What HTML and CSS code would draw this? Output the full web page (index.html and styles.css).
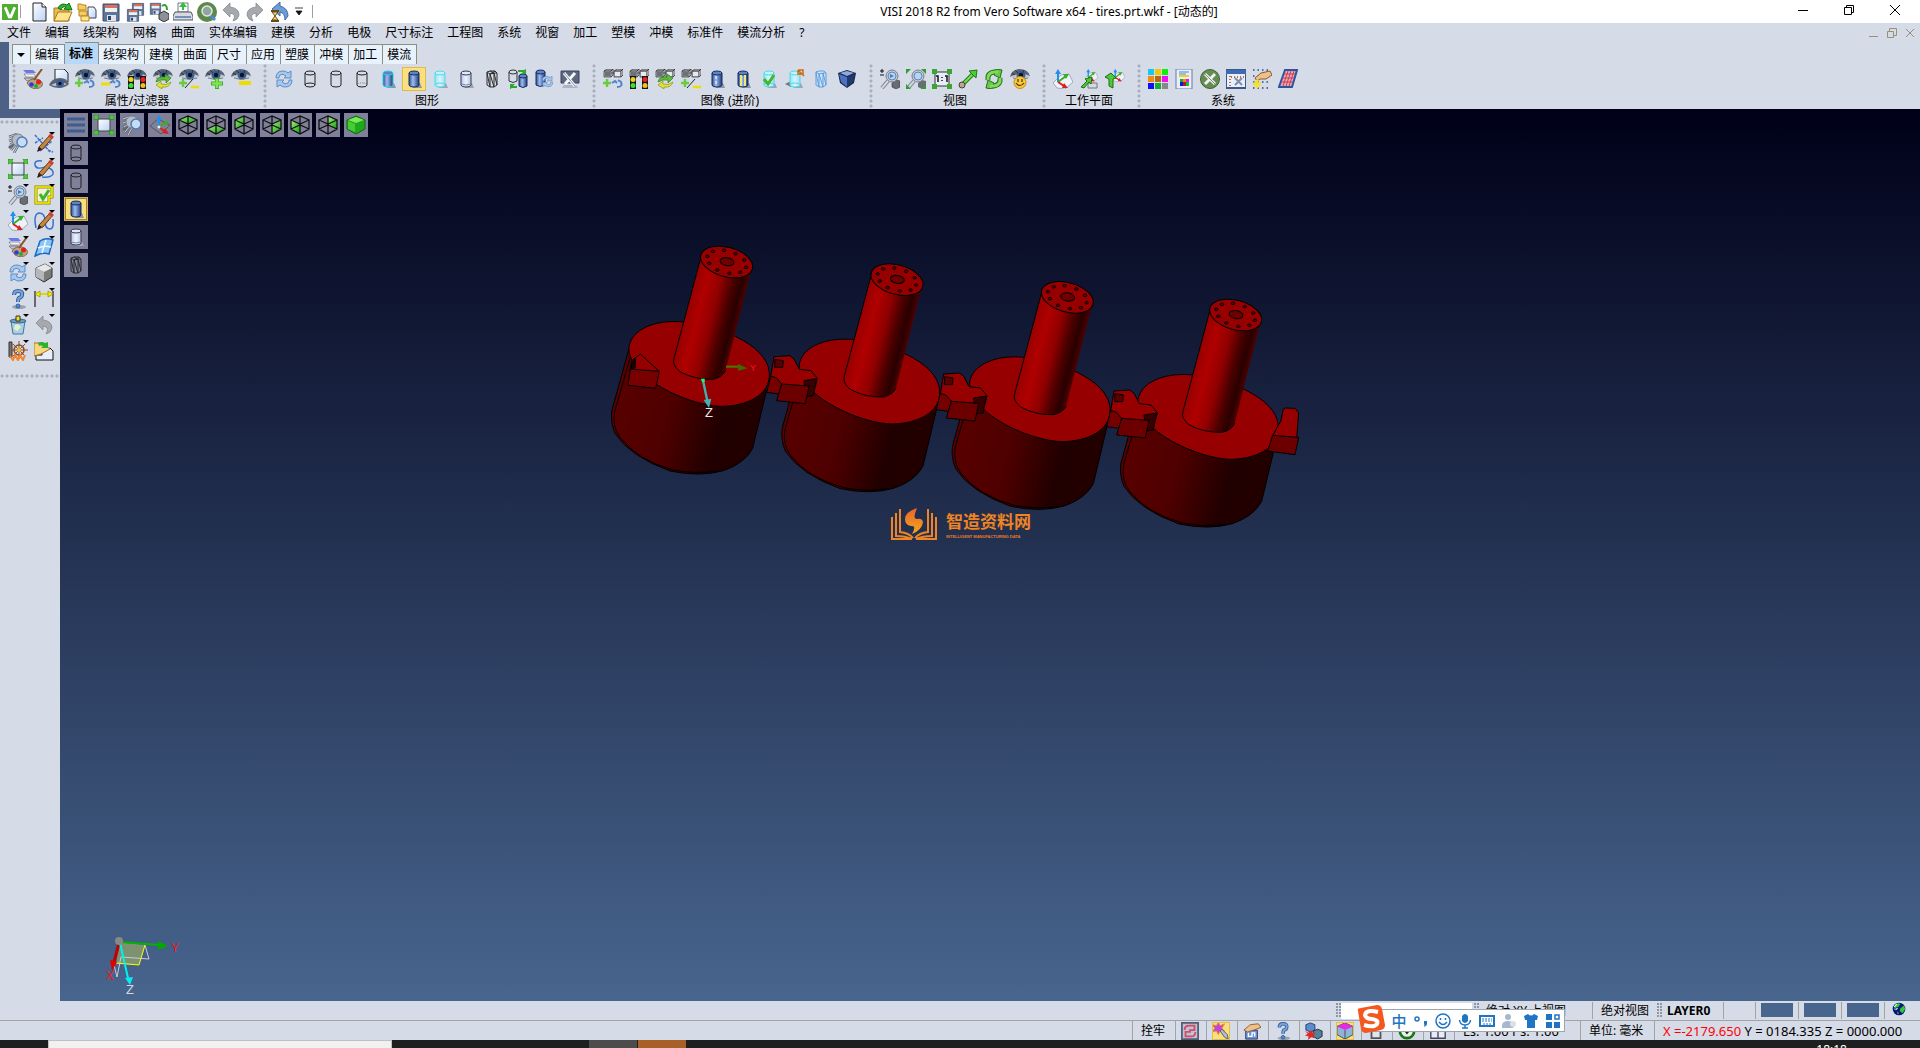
FILE: index.html
```html
<!DOCTYPE html>
<html lang="zh-CN">
<head>
<meta charset="utf-8">
<title>VISI 2018 R2 from Vero Software x64 - tires.prt.wkf - [动态的]</title>
<link rel="stylesheet" href="styles.css">
</head>
<body>
<svg class="sprite" aria-hidden="true">
<defs>
<linearGradient id="gBlue"><stop offset="0" stop-color="#2c4f94"/><stop offset=".4" stop-color="#9dbdf0"/><stop offset="1" stop-color="#1d3a78"/></linearGradient>
<linearGradient id="gLight"><stop offset="0" stop-color="#b4c4e6"/><stop offset=".5" stop-color="#eef3ff"/><stop offset="1" stop-color="#b4c4e6"/></linearGradient>
<linearGradient id="gCyan"><stop offset="0" stop-color="#8fe4f4"/><stop offset=".5" stop-color="#dcf4fc"/><stop offset="1" stop-color="#a8d8ee"/></linearGradient>
<linearGradient id="gPane" x2="1" y2="1"><stop offset="0" stop-color="#fff"/><stop offset="1" stop-color="#b9d2f7"/></linearGradient>
<linearGradient id="gGreen" x2="1" y2="1"><stop offset="0" stop-color="#a4f07c"/><stop offset="1" stop-color="#12a012"/></linearGradient>
<linearGradient id="gOrange" x2="0" y2="1"><stop offset="0" stop-color="#e8642c"/><stop offset="1" stop-color="#f4a71c"/></linearGradient>
<linearGradient id="gShaft" gradientUnits="userSpaceOnUse" x1="258" y1="240" x2="414" y2="280"><stop offset="0" stop-color="#960000"/><stop offset=".25" stop-color="#b00000"/><stop offset=".5" stop-color="#900000"/><stop offset=".72" stop-color="#4a0000"/><stop offset=".88" stop-color="#280000"/><stop offset="1" stop-color="#500000"/></linearGradient>
<linearGradient id="gBody" gradientUnits="userSpaceOnUse" x1="60" y1="540" x2="470" y2="640"><stop offset="0" stop-color="#580000"/><stop offset=".35" stop-color="#4e0000"/><stop offset=".72" stop-color="#200000"/><stop offset="1" stop-color="#230000"/></linearGradient>
</defs>

<symbol id="eye" viewBox="0 0 20 20"><path d="M1 8Q6 3 12 3Q18 4 20 8Q14 12 7 10Z" fill="#c3c9d6"/><path d="M0 8Q1 1 9 0Q18 0 20 7Q14 4 8 5Q3 6 0 8Z" fill="#5b6472"/><circle cx="11" cy="6" r="4.500" fill="#3c5f92"/><circle cx="11" cy="6" r="2.200" fill="#0c1424"/><path d="M2 4L5 6M5 1L8 4M14 1L13 4" stroke="#2c3440"/><path d="M3 9Q10 12 18 9" fill="none" stroke="#7a8290"/></symbol>
<symbol id="link" viewBox="0 0 20 20"><path d="M9 14L12 12L14 14M14 18Q20 18 18 13L15 11" fill="none" stroke="#4d84cc" stroke-width="2"/></symbol>
<symbol id="plus" viewBox="0 0 20 20"><path d="M12 9V20M6 14.500H18" stroke="#3fae2f" stroke-width="4"/><path d="M12 10V19M7 14.500H17" stroke="#7fe64a" stroke-width="2.500"/></symbol>
<symbol id="plusS" viewBox="0 0 20 20"><path d="M4 10V18M0 14H8" stroke="#68cc3c" stroke-width="2.500"/></symbol>
<symbol id="lights" viewBox="0 0 20 20"><path d="M1 7H7V20H1ZM13 7H19V20H13Z" fill="#161616"/><circle cx="4" cy="10.500" r="2.500" fill="#f0d020"/><circle cx="4" cy="16.500" r="2.500" fill="#38e038"/><circle cx="16" cy="10.500" r="2.500" fill="#f02020"/><circle cx="16" cy="16.500" r="2.500" fill="#f0c020"/></symbol>
<symbol id="cycle" viewBox="0 0 20 20"><path d="M3 13Q4 7 12 8L12 5L18 9L13 14V11Q8 10 3 13Z" fill="#60b83c" stroke="#2d7c18" stroke-width=".7"/><path d="M18 13Q16 19 9 18V20L3 16L8 12V15Q13 17 18 13Z" fill="#e2e235" stroke="#8a9216" stroke-width=".7"/></symbol>
<symbol id="pm" viewBox="0 0 20 20"><path d="M4 10V18M0 14H8" stroke="#68cc3c" stroke-width="2.500"/><path d="M6 19L14 10" stroke="#222"/><path d="M12 18H20" stroke="#f2dc00" stroke-width="2.500"/></symbol>
<symbol id="eyeLink" viewBox="0 0 20 20"><use href="#eye"/><use href="#plusS"/><use href="#link"/></symbol>
<symbol id="eyeUnlink" viewBox="0 0 20 20"><use href="#eye"/><path d="M0 15H9" stroke="#f2dc00" stroke-width="3"/><use href="#link"/></symbol>
<symbol id="eyeLights" viewBox="0 0 20 20"><use href="#eye"/><use href="#lights"/></symbol>
<symbol id="eyeCycle" viewBox="0 0 20 20"><use href="#eye"/><use href="#cycle"/></symbol>
<symbol id="eyePm" viewBox="0 0 20 20"><use href="#eye"/><use href="#pm"/></symbol>
<symbol id="eyePlus" viewBox="0 0 20 20"><use href="#eye"/><use href="#plus"/></symbol>
<symbol id="eyeMinus" viewBox="0 0 20 20"><use href="#eye"/><path d="M8 14H20" stroke="#f2dc00" stroke-width="4"/></symbol>
<symbol id="palette" viewBox="0 0 20 20"><path d="M0 1H10L13 4H3Z" fill="#6a78e8"/><path d="M1 5H11L13 8H3Z" fill="#f0f2f8" stroke="#666" stroke-width=".6"/><path d="M1 9H10L11 12H4Z" fill="#bcc2d0" stroke="#555" stroke-width=".6"/><path d="M4 14Q7 9 14 10Q21 12 19 17Q14 22 7 18Z" fill="#c6a07a" stroke="#6e4a2a" stroke-width=".7"/><circle cx="8.500" cy="15.500" r="2.300" fill="#2040e0"/><circle cx="13" cy="17" r="2" fill="#18b030"/><circle cx="15.500" cy="13" r="2.500" fill="#e02020"/><path d="M19 0L11 11" stroke="#8a5426" stroke-width="2"/></symbol>
<symbol id="docEye" viewBox="0 0 20 20"><path d="M6 0H15L19 4V13H6Z" fill="url(#gPane)" stroke="#222"/><path d="M0 16Q3 9 11 9Q18 9 20 15Q17 18 11 19Q4 19 0 16Z" fill="#59626f"/><path d="M2 16Q10 11 18 15Q10 19 2 16Z" fill="#b9c0ce"/><circle cx="11" cy="14.500" r="4" fill="#3c5e98"/><circle cx="11" cy="14.500" r="1.700" fill="#111"/></symbol>
<symbol id="sync" viewBox="0 0 20 20"><path d="M2 9Q2 2 9 2Q12 2 14 4L17 2V9H10L12 7Q9 4 6 6Q5 7 5 9Z" fill="#a6c8ee" stroke="#5d8dc4"/><path d="M18 11Q18 18 11 18Q8 18 6 16L3 18V11H10L8 13Q11 16 14 14Q15 13 15 11Z" fill="#a6c8ee" stroke="#5d8dc4"/></symbol>
<symbol id="cylWire" viewBox="0 0 20 20"><path d="M5 4V16Q5 18 10 18T15 16V4" fill="none" stroke="#222"/><ellipse cx="10" cy="4" rx="5" ry="2" fill="none" stroke="#222"/><path d="M5 16Q5 14 10 14T15 16" fill="none" stroke="#222"/></symbol>
<symbol id="cylOpen" viewBox="0 0 20 20"><path d="M5 4V16Q5 18 10 18T15 16V4" fill="none" stroke="#222"/><ellipse cx="10" cy="4" rx="5" ry="2" fill="none" stroke="#222"/></symbol>
<symbol id="cylDim" viewBox="0 0 20 20"><use href="#cylOpen"/><path d="M5 16Q5 14 10 14T15 16" fill="none" stroke="#777" stroke-dasharray="1 1"/></symbol>
<symbol id="cylBlue" viewBox="0 0 20 20"><path d="M8 19H18L16 14Z" fill="#8d94a6"/><path d="M5 4V16Q5 18 10 18T15 16V4Z" fill="url(#gBlue)" stroke="#182d5c"/><ellipse cx="10" cy="4" rx="5" ry="2" fill="#5e84c8" stroke="#182d5c"/></symbol>
<symbol id="cylEdge" viewBox="0 0 20 20"><path d="M8 19H18L16 14Z" fill="#8d94a6"/><path d="M5 4V16Q5 18 10 18T15 16V4Z" fill="url(#gBlue)" stroke="#28cfe6"/><ellipse cx="10" cy="4" rx="5" ry="2" fill="#5e84c8" stroke="#28cfe6"/></symbol>
<symbol id="cylCyan" viewBox="0 0 20 20"><path d="M8 19H18L16 14Z" fill="#9da4b4"/><path d="M5 4V16Q5 18 10 18T15 16V4Z" fill="url(#gCyan)" stroke="#46dcec"/><ellipse cx="10" cy="4" rx="5" ry="2" fill="#c9f1fa" stroke="#46dcec"/><path d="M5 16Q5 14 10 14T15 16" fill="none" stroke="#46dcec"/></symbol>
<symbol id="cylLight" viewBox="0 0 20 20"><path d="M8 19H18L16 14Z" fill="#9da4b4"/><path d="M5 4V16Q5 18 10 18T15 16V4Z" fill="url(#gLight)" stroke="#333c50"/><ellipse cx="10" cy="4" rx="5" ry="2" fill="#dfe7f8" stroke="#333c50"/><path d="M5 15Q10 17 15 15" fill="none" stroke="#7888a8"/></symbol>
<symbol id="cylTri" viewBox="0 0 20 20"><path d="M5 3L8 2H13L15 4V16L12 18H8L5 16ZM5 3L8 5L13 4L15 4M8 5V18M8 5L12 18V4L15 16M8 18L5 4M8 5L13 2M12 4L8 2" fill="none" stroke="#2c2c2c"/></symbol>
<symbol id="cylMesh" viewBox="0 0 20 20"><path d="M5 3L8 2H13L15 4V16L12 18H8L5 16ZM5 3L8 5L13 4L15 4M8 5V18M8 5L12 18V4L15 16M8 18L5 4" fill="#cfe3fa" stroke="#5d9edc"/></symbol>
<symbol id="cylSwap" viewBox="0 0 20 20"><path d="M1 3V12Q5 15 9 12V3" fill="none" stroke="#333"/><ellipse cx="5" cy="3" rx="4" ry="2" fill="none" stroke="#333"/><path d="M11 7V17Q15 20 19 17V7Z" fill="url(#gBlue)" stroke="#182d5c"/><ellipse cx="15" cy="7" rx="4" ry="2" fill="#5e84c8" stroke="#182d5c"/><path d="M10 1H16L18 0V5H13L15 3H10ZM9 19H4L2 20V15H7L5 17H9Z" fill="#2fa62f"/></symbol>
<symbol id="cylSync" viewBox="0 0 20 20"><path d="M2 3V16Q6 19 11 16V3Z" fill="url(#gBlue)" stroke="#182d5c"/><ellipse cx="6.500" cy="3" rx="4.500" ry="2" fill="#5e84c8" stroke="#182d5c"/><use href="#sync" x="7" y="6" width="13" height="13"/></symbol>
<symbol id="wrench" viewBox="0 0 20 20"><path d="M1 2H19V14H1Z" fill="#5c6880" stroke="#39435a"/><path d="M4 16H16L18 19H2Z" fill="#aeb4c4"/><path d="M4 4L15 17M15 4L5 15" stroke="#f4f6fa" stroke-width="3"/><path d="M4 4L15 17" stroke="#8993a8"/></symbol>
<symbol id="boxes" viewBox="0 0 20 20"><path d="M1 2L4 0H10L8 2V8H1ZM11 2L14 0H20L18 2V8H11Z" fill="#a9adb6" stroke="#444" stroke-width=".8"/><path d="M1 2H8L10 0V6L8 8M11 2H18L20 0V6L18 8M8 4H11" fill="none" stroke="#333" stroke-width=".8"/><path d="M2 3H7V7H2Z" fill="#6c7078"/><path d="M12 3H17V7H12Z" fill="#e6e9f0"/></symbol>
<symbol id="boxLink" viewBox="0 0 20 20"><use href="#boxes"/><use href="#plusS"/><use href="#link"/></symbol>
<symbol id="boxLights" viewBox="0 0 20 20"><use href="#boxes"/><use href="#lights"/></symbol>
<symbol id="boxCycle" viewBox="0 0 20 20"><use href="#boxes"/><use href="#cycle"/></symbol>
<symbol id="boxPm" viewBox="0 0 20 20"><use href="#boxes"/><use href="#pm"/></symbol>
<symbol id="cylDash" viewBox="0 0 20 20"><use href="#cylBlue"/><path d="M9 7V17" stroke="#fff" stroke-dasharray="3 2"/></symbol>
<symbol id="cylStripe" viewBox="0 0 20 20"><use href="#cylBlue"/><path d="M8 6V17M12 6V17" stroke="#f2e878" stroke-width="2"/></symbol>
<symbol id="cylCheck" viewBox="0 0 20 20"><use href="#cylCyan"/><path d="M5 10L9 15L15 6" fill="none" stroke="#45b52c" stroke-width="3"/></symbol>
<symbol id="cylTag" viewBox="0 0 20 20"><path d="M0 15L6 12V18Z" fill="#777"/><use href="#cylCyan"/><path d="M13 1H18V6M13 1V5H17M14 2L19 7" fill="none" stroke="#d06a10" stroke-width="1.500"/></symbol>
<symbol id="cubeDark" viewBox="0 0 20 20"><path d="M1 4L10 1L19 4L17 14L10 19L3 14Z" fill="#16264e"/><path d="M2 5L10 8V18L4 13Z" fill="#4b72c0"/><path d="M3 4L10 2L17 4L10 7Z" fill="#8fa9dc"/><path d="M10 8L18 5L16 13L10 18Z" fill="#23396e"/></symbol>
<symbol id="lens" viewBox="0 0 20 20"><path d="M8 12L2 19" stroke="#7c8490" stroke-width="4"/><path d="M8 12L2 19" stroke="#d0d5de" stroke-width="2"/><circle cx="12" cy="7" r="6" fill="#c3ccd8" stroke="#77808e"/><circle cx="12" cy="7" r="4" fill="#b9d5f2" stroke="#5c86b8"/></symbol>
<symbol id="zoomCube" viewBox="0 0 20 20"><path d="M12 14L16 11L20 12V18L16 20L12 18Z" fill="#696d72" stroke="#333" stroke-width=".6"/><use href="#lens"/><path d="M10 5L14 7L10 9Z" fill="#55799e"/><path d="M0 2H4M2 0V4M0 6H4" stroke="#111"/></symbol>
<symbol id="zoomFit" viewBox="0 0 20 20"><path d="M12 14L16 11L20 12V18L16 20L12 18Z" fill="#696d72"/><use href="#lens"/><path d="M0 0H5L0 5ZM20 0H15L20 5ZM0 20V15L5 20ZM20 20V15L15 20Z" fill="#2c9e2c"/></symbol>
<symbol id="zoomStack" viewBox="0 0 20 20"><path d="M1 4L9 1M1 8L9 5M2 12L8 8M8 11L3 17M10 13L6 20M6 10L1 15" stroke="#5f6874" stroke-width="2.500"/><path d="M1 4L9 1M1 8L9 5M2 12L8 8M8 11L3 17M10 13L6 20" stroke="#c9cfda"/><circle cx="10" cy="7" r="6" fill="#b5bcc8" stroke="#77808e"/><circle cx="14" cy="9" r="5" fill="#c6dcf4" stroke="#4f7cb4" stroke-width="1.500"/></symbol>
<symbol id="fit" viewBox="0 0 20 20"><path d="M4 4H16V16H4Z" fill="url(#gPane)" stroke="#444"/><path d="M0 0H5L4 2L5 5L2 4L0 5ZM20 0V5L18 4L15 5L16 2L15 0ZM0 20V15L2 16L5 15L4 18L5 20ZM20 20H15L16 18L15 15L18 16L20 15Z" fill="#52ca38" stroke="#1b7c16" stroke-width=".6"/></symbol>
<symbol id="fit11" viewBox="0 0 20 20"><path d="M3 3H17V17H3Z" fill="#e6edf8" stroke="#333"/><path d="M0 0H5V5H0ZM15 0H20V5H15ZM0 15H5V20H0ZM15 15H20V20H15Z" fill="#3aa52f"/><path d="M4 7H6V13M13 7H15V13M10 8V9M10 11V12" fill="none" stroke="#111" stroke-width="1.500"/></symbol>
<symbol id="arrowG" viewBox="0 0 20 20"><path d="M5 15L16 4" stroke="#1b7c16" stroke-width="4"/><path d="M5 15L16 4" stroke="#7be04e" stroke-width="2"/><path d="M11 2L19 1L18 9Z" fill="#52ca38" stroke="#1b7c16"/><circle cx="4" cy="16" r="3" fill="#b8a894" stroke="#4a4038"/></symbol>
<symbol id="syncG" viewBox="0 0 20 20"><path d="M4 11Q3 4 10 3H14" fill="none" stroke="#1f6e18" stroke-width="5"/><path d="M16 9Q17 16 10 17H6" fill="none" stroke="#1f6e18" stroke-width="5"/><path d="M12 0L18 1L16 9L10 6ZM8 20L2 19L4 11L10 14Z" fill="#6bc94a" stroke="#1f6e18"/><path d="M4 11Q3 4 10 3H14M16 9Q17 16 10 17H6" fill="none" stroke="#7fdc58" stroke-width="3"/></symbol>
<symbol id="smile" viewBox="0 0 20 20"><use href="#eye"/><circle cx="10" cy="13.500" r="6" fill="#f8c83c" stroke="#d08a10"/><path d="M8 10V13M12 10V13M6 14Q10 19 14 14" fill="none" stroke="#4a3208" stroke-width="1.200"/></symbol>
<symbol id="axes" viewBox="0 0 20 20"><path d="M0 14L8 6L16 5L20 13L12 20L4 19Z" fill="#eef1f8" stroke="#8e9ab0" stroke-width=".8"/><path d="M5 13V3" stroke="#1f8ff0" stroke-width="2"/><path d="M2 5L5 0L8 5Z" fill="#1f8ff0"/><path d="M5 13L13 7" stroke="#38b028" stroke-width="2"/><path d="M10 5L16 5L13 10Z" fill="#38b028"/><path d="M5 13L11 17" stroke="#d82020" stroke-width="2"/><path d="M9 19L11 14L15 19Z" fill="#d82020"/></symbol>
<symbol id="axesDark" viewBox="0 0 20 20"><path d="M0 11L8 4L20 10L11 19Z" fill="none" stroke="#555"/><path d="M9 12V4" stroke="#1f8ff0" stroke-width="2"/><path d="M6 5L9 0L12 5Z" fill="#1f8ff0"/><path d="M9 12L15 8" stroke="#38b028" stroke-width="2"/><path d="M14 6L19 6L16 11Z" fill="#38b028"/><path d="M9 12L14 16" stroke="#d82020" stroke-width="2"/><path d="M12 18L15 13L19 19Z" fill="#d82020"/><circle cx="9" cy="12" r="1.500" fill="#eee"/></symbol>
<symbol id="axes2" viewBox="0 0 20 20"><use href="#axes" x="6" y="0" width="13" height="13"/><path d="M9 14H18V19H9Z" fill="#d4d8e0" stroke="#777"/><path d="M2 18L8 12L6 10L13 8L12 15L10 13L5 19Z" fill="#52ca38" stroke="#1b6c16"/></symbol>
<symbol id="axes3" viewBox="0 0 20 20"><use href="#axes" x="7" y="0" width="13" height="13"/><path d="M0 8L6 4L11 9L8 10V19L4 17V10Z" fill="#52ca38" stroke="#1b6c16"/></symbol>
<symbol id="colors" viewBox="0 0 20 20"><path d="M0 0H6V6H0Z" fill="#12c8f4"/><path d="M7 0H13V6H7Z" fill="#f4c800"/><path d="M14 0H20V6H14Z" fill="#10f010"/><path d="M0 7H6V13H0Z" fill="#f48a12"/><path d="M7 7H13V13H7Z" fill="#b06a10"/><path d="M14 7H20V13H14Z" fill="#f010f0"/><path d="M0 14H6V20H0Z" fill="#1010f0"/><path d="M7 14H13V20H7Z" fill="#10b030"/><path d="M14 14H20V20H14Z" fill="#888"/></symbol>
<symbol id="docGrid" viewBox="0 0 20 20"><path d="M2 0H18V20H2Z" fill="#e8eefa" stroke="#667ba6"/><path d="M5 3H15M5 5H12" stroke="#4a84d8"/><path d="M5 7H15" stroke="#f0d020" stroke-width="2"/><path d="M6 10H9V13H6Z" fill="#10b030"/><path d="M9 10H12V13H9Z" fill="#f48a12"/><path d="M12 10H15V13H12Z" fill="#f010f0"/><path d="M6 13H9V17H6Z" fill="#1010f0"/><path d="M9 13H12V17H9Z" fill="#b02010"/><path d="M12 13H15V17H12Z" fill="#10c040"/></symbol>
<symbol id="toolCircle" viewBox="0 0 20 20"><circle cx="10" cy="10" r="9.500" fill="#658d50" stroke="#43603a"/><path d="M5 5L15 15M15 5L5 15" stroke="#eef2ee" stroke-width="3"/><path d="M5 5L15 15" stroke="#80878c"/></symbol>
<symbol id="winTool" viewBox="0 0 20 20"><path d="M0 1H20V19H0Z" fill="#e8eefa" stroke="#39588c" stroke-width="2"/><path d="M0 1H20V5H0Z" fill="#3d6bb4"/><path d="M4 7V18M5 8H18" stroke="#b8703c" stroke-width="2" stroke-dasharray="1 2"/><path d="M9 9L16 16M16 9L9 16" stroke="#7f8ea8" stroke-width="2"/></symbol>
<symbol id="handGrid" viewBox="0 0 20 20"><path d="M1 1H19M1 7H19M1 13H19M1 19H19" stroke="#2a4a88" stroke-width="1.500" stroke-dasharray="1.500 3"/><path d="M3 9L9 4L18 2L20 6L14 10H8L5 12Z" fill="#eec08a" stroke="#8a5a2a"/><path d="M5 11V19M1 15H9" stroke="#f4e02a" stroke-width="3"/></symbol>
<symbol id="gridRed" viewBox="0 0 20 20"><path d="M7 1H19L14 18H1Z" fill="#e4aab6" stroke="#2c54a0" stroke-width="2"/><path d="M10 2L5 17M13 2L8 17M16 2L11 17M6 5H17M4 9H16M3 13H15" stroke="#cc3c50"/></symbol>

<symbol id="visi" viewBox="0 0 20 20"><path d="M0 0H20V20H0Z" fill="#4fae32"/><path d="M4 4L9 16H11L16 4" fill="none" stroke="#fff" stroke-width="3.500"/></symbol>
<symbol id="newDoc" viewBox="0 0 20 20"><path d="M4 1H13L17 5V19H4Z" fill="url(#gPane)" stroke="#222"/><path d="M13 1V5H17" fill="#fff" stroke="#222"/></symbol>
<symbol id="open" viewBox="0 0 20 20"><path d="M1 6H7L9 8H16V19H1Z" fill="#e8bc50" stroke="#a87818"/><path d="M5 10H19L15 19H1Z" fill="#ffe490" stroke="#a87818"/><path d="M5 6Q8 0 14 3L16 1L19 8L11 7L13 5Q9 4 8 8Z" fill="#30b030" stroke="#147014"/></symbol>
<symbol id="folders" viewBox="0 0 20 20"><path d="M1 2H4L6 3H9V8H1ZM2 9H10V14H2Z" fill="#f4cc64" stroke="#b88418"/><path d="M11 5H17L19 8V16H11Z" fill="url(#gPane)" stroke="#445"/><path d="M4 14H12V19H4Z" fill="#ffe490" stroke="#b88418"/></symbol>
<symbol id="save" viewBox="0 0 20 20"><path d="M2 2H18V19H2Z" fill="#5c7598" stroke="#3d4f6c"/><path d="M4 3H16V6H4Z" fill="#e07058"/><path d="M4 6H16V10H4Z" fill="#edf1f6"/><path d="M6 13H15V19H6Z" fill="#dfe4ec"/><path d="M7 14H10V18H7Z" fill="#2c4668"/></symbol>
<symbol id="saveAll" viewBox="0 0 20 20"><use href="#save" x="6" y="0" width="14" height="14"/><use href="#save" x="1" y="6" width="14" height="14"/></symbol>
<symbol id="saveBox" viewBox="0 0 20 20"><use href="#save" x="0" y="0" width="13" height="13"/><path d="M10 12L15 9L20 12V17L15 20L10 17Z" fill="#8c9098" stroke="#333"/><path d="M13 4Q18 1 18 8" fill="none" stroke="#30a030" stroke-width="2"/></symbol>
<symbol id="print" viewBox="0 0 20 20"><path d="M5 1H15V10H5Z" fill="#fff" stroke="#778"/><path d="M10 0L14 5H11V8H9V5H6Z" fill="#30c040"/><path d="M2 10H18L20 14V18H0V14Z" fill="#d4d9e2" stroke="#556"/><path d="M2 15H18" stroke="#7790b8" stroke-width="2"/></symbol>
<symbol id="finder" viewBox="0 0 20 20"><circle cx="10" cy="10" r="10" fill="#5c8848"/><path d="M13 13L18 18" stroke="#4e8ad0" stroke-width="3"/><circle cx="10" cy="9" r="5" fill="#8fa69c" stroke="#e2e8ea" stroke-width="1.500"/></symbol>
<symbol id="undo" viewBox="0 0 20 20"><path d="M2 8L9 1V5Q18 6 18 13Q17 18 12 19Q16 12 9 11V15Z" fill="#a6a9ae" stroke="#85898f" stroke-width=".8"/></symbol>
<symbol id="redo" viewBox="0 0 20 20"><path d="M18 8L11 1V5Q2 6 2 13Q3 18 8 19Q4 12 11 11V15Z" fill="#a6a9ae" stroke="#85898f" stroke-width=".8"/></symbol>
<symbol id="hour" viewBox="0 0 20 20"><path d="M3 7L11 0V4Q19 6 19 14L16 18Q16 11 11 10V14Z" fill="#6c9cd4" stroke="#406ca8"/><path d="M2 9H10M2 19H10" stroke="#6c4c10" stroke-width="2"/><path d="M3 10H9L6 14L9 18H3L6 14Z" fill="#f0d880" stroke="#6c4c10"/></symbol>

<symbol id="pencil" viewBox="0 0 20 20"><path d="M5 14L16 2L19 4L9 16L4 18Z" fill="#c48442" stroke="#5e3614"/><path d="M15 2L19 5" stroke="#d83c2c" stroke-width="3"/><path d="M3 19L5 14L8 16Z" fill="#222"/></symbol>
<symbol id="penLines" viewBox="0 0 20 20"><path d="M1 2L16 19M6 18L18 8M1 10L9 5M14 17L19 19" stroke="#3a72cc" stroke-width="1.500" stroke-dasharray="3 1"/><use href="#pencil"/></symbol>
<symbol id="penCurve" viewBox="0 0 20 20"><path d="M8 2Q0 1 1 6T12 8Q20 10 19 15Q17 19 8 18" fill="none" stroke="#3a72cc" stroke-width="1.500"/><use href="#pencil"/></symbol>
<symbol id="penWave" viewBox="0 0 20 20"><path d="M2 17Q-1 3 5 2Q11 2 11 10T16 18Q20 18 19 8" fill="none" stroke="#3a72cc" stroke-width="1.500"/><use href="#pencil"/></symbol>
<symbol id="okBox" viewBox="0 0 20 20"><path d="M2 2H18V12H15V18H2Z" fill="#eef2dc" stroke="#8a8800" stroke-width="3"/><path d="M2 2H18V12H15V18H2Z" fill="none" stroke="#fff000" stroke-width="1.500"/><path d="M6 9L9 14L15 5" fill="none" stroke="#3fb42a" stroke-width="3"/></symbol>
<symbol id="surface" viewBox="0 0 20 20"><path d="M6 4Q12 0 19 3L15 17Q8 15 1 19Z" fill="#8cc8f4" stroke="#1d68c0" stroke-width="1.500"/><path d="M12 3L8 16M4 11Q10 8 17 10" stroke="#f0f8ff" stroke-width="1.500" fill="none"/></symbol>
<symbol id="cubeGray" viewBox="0 0 20 20"><path d="M2 5L11 1L18 5V14L10 19L2 14Z" fill="#7a7c7c" stroke="#333"/><path d="M2 5L11 1L18 5L10 9Z" fill="#e6e8e8"/><path d="M2 5L10 9V18L2 14Z" fill="#b4b8b8"/></symbol>
<symbol id="dim" viewBox="0 0 20 20"><path d="M1 2V18M19 2V18" stroke="#444" stroke-width="1.500"/><path d="M3 5H17" stroke="#e0d800" stroke-width="2"/><path d="M1 5L6 2V8ZM19 5L14 2V8Z" fill="#f4ec00" stroke="#888000" stroke-width=".6"/></symbol>
<symbol id="help" viewBox="0 0 20 20"><ellipse cx="11" cy="18" rx="7" ry="2" fill="#9aa2b2"/><path d="M6 6Q6 2 10 2Q15 2 14 6Q14 8 11 9Q10 10 10 13" fill="none" stroke="#33609f" stroke-width="4"/><path d="M6 6Q6 2 10 2Q15 2 14 6Q14 8 11 9Q10 10 10 13" fill="none" stroke="#7ba7dc" stroke-width="2"/><circle cx="10" cy="17" r="2" fill="#5a88c4" stroke="#33609f"/></symbol>
<symbol id="bin" viewBox="0 0 20 20"><path d="M3 6H17L15 19H5Z" fill="#a9d0e4" stroke="#44769c"/><ellipse cx="10" cy="6" rx="8" ry="2" fill="#6c9cc0" stroke="#34648c"/><path d="M8 1H12V6H8Z" fill="#f0e020" stroke="#333"/><path d="M7 10L10 9L13 12L9 16L6 14Z" fill="#e6f2c8"/></symbol>
<symbol id="wheel" viewBox="0 0 20 20"><path d="M1 1H4V16H1Z" fill="#777" stroke="#333"/><circle cx="11" cy="9" r="5" fill="none" stroke="#8c4a28" stroke-width="1.500"/><path d="M11 0V18M3 9H20M5 3L17 15M17 3L5 15" stroke="#8c4a28"/><circle cx="11" cy="9" r="2" fill="#f4c020"/><path d="M2 15L5 19L7 14L10 19L12 14L15 19L17 14" fill="none" stroke="#f4842c" stroke-width="2"/></symbol>
<symbol id="folderDoc" viewBox="0 0 20 20"><path d="M2 14H8V11L16 7L19 10V19H2Z" fill="#e8eefc" stroke="#111"/><path d="M0 2H9L16 8L7 13L0 15Z" fill="#f6d880" stroke="#a87818"/><path d="M4 2Q8 0 11 2L14 1V7H7L9 5Q7 4 5 5Z" fill="#30b030"/></symbol>

<symbol id="menu" viewBox="0 0 20 20"><path d="M1 4H19M1 10H19M1 16H19" stroke="#3d5c90" stroke-width="3"/></symbol>
<symbol id="cubeLine" viewBox="0 0 20 20"><path d="M1 5L10 1L19 5V14L10 19L1 14ZM1 5L10 9L19 5M10 9V19M1 14L10 10L19 14M10 1V9" fill="none" stroke="#101010" stroke-width="1.300"/></symbol>
<symbol id="cTop" viewBox="0 0 20 20"><path d="M1 5L10 1L19 5L10 9Z" fill="url(#gGreen)"/><use href="#cubeLine"/></symbol>
<symbol id="cBottom" viewBox="0 0 20 20"><path d="M1 14L10 10L19 14L10 19Z" fill="url(#gGreen)"/><use href="#cubeLine"/></symbol>
<symbol id="cBackL" viewBox="0 0 20 20"><path d="M1 5L10 1V10L1 14Z" fill="url(#gGreen)"/><use href="#cubeLine"/></symbol>
<symbol id="cFrontR" viewBox="0 0 20 20"><path d="M10 9L19 5V14L10 19Z" fill="url(#gGreen)"/><use href="#cubeLine"/></symbol>
<symbol id="cFrontL" viewBox="0 0 20 20"><path d="M1 5L10 9V19L1 14Z" fill="url(#gGreen)"/><use href="#cubeLine"/></symbol>
<symbol id="cBackR" viewBox="0 0 20 20"><path d="M10 1L19 5V14L10 10Z" fill="url(#gGreen)"/><use href="#cubeLine"/></symbol>
<symbol id="cAll" viewBox="0 0 20 20"><path d="M1 5L10 1L19 5V14L10 19L1 14Z" fill="#1ea81a" stroke="#0c6c0c"/><path d="M2 5L10 2L18 5L10 8Z" fill="#7ae85c"/><path d="M2 6L9 9V17L2 14Z" fill="#48cc34"/></symbol>

<symbol id="redSync" viewBox="0 0 20 20"><path d="M1 1H19V19H1Z" fill="#bac2dc" stroke="#555e74" stroke-width="2"/><path d="M4 9Q4 4 9 4L15 4V9H9M16 11Q16 16 11 16H5V11H11" fill="none" stroke="#d84c60" stroke-width="2"/></symbol>
<symbol id="wand" viewBox="0 0 20 20"><path d="M7 0L9 4L14 2L11 7L14 10L9 10L7 14L5 10L0 11L3 7L0 3L5 4Z" fill="#c444d8" stroke="#f09020"/><path d="M9 10L14 17L18 19L17 14L11 8Z" fill="#b4bcc8" stroke="#556"/></symbol>
<symbol id="handBox" viewBox="0 0 20 20"><path d="M3 9H16V19H3Z" fill="#6a94d8" stroke="#335"/><path d="M6 12V16H10V12H13V16" fill="none" stroke="#fff" stroke-width="1.500"/><path d="M1 9L8 3L17 2L20 6L12 9L5 11Z" fill="#eec08a" stroke="#8a5a2a"/></symbol>
<symbol id="cubes" viewBox="0 0 20 20"><path d="M1 3L6 1L11 3V9L6 11L1 9Z" fill="#5c8ccc" stroke="#223a66"/><path d="M9 10L14 8L19 10V16L14 19L9 16Z" fill="#56809a" stroke="#182c38"/><path d="M0 10L4 12L7 9L8 12H12L9 15L11 18L7 17L3 20L4 16L0 15L3 13Z" fill="#e02828"/></symbol>
<symbol id="cubeMag" viewBox="0 0 20 20"><path d="M1 5L10 1L19 5V14L10 19L1 14Z" fill="#8fb4dc" stroke="#444"/><path d="M1 5L10 1L19 5L10 9Z" fill="#e42ae4"/><path d="M10 9V19" stroke="#444"/></symbol>
<symbol id="globe" viewBox="0 0 20 20"><circle cx="10" cy="10" r="9" fill="#0b1280"/><path d="M4 4Q9 0 12 3L9 7L6 8L3 12ZM12 9L17 5L19 10L15 16L11 13ZM7 13L10 16L8 18Z" fill="#2ccc38"/><path d="M3 7L7 3M5 11L8 9" stroke="#dff" stroke-width="1.500"/></symbol>

<symbol id="tire" viewBox="0 0 560 800" overflow="visible">
<path d="M86 360L36 540Q30 575 45 610Q90 680 210 723Q300 742 370 722Q435 700 458 655L500 480Z" fill="url(#gBody)" stroke="#000" stroke-width="3"/>
<path d="M92 378L44 545Q36 590 60 622Q110 690 220 720Q285 733 350 723" fill="none" stroke="#000" stroke-width="3"/>
<path d="M87 350C95 300 160 270 240 275C340 282 505 340 508 430C512 495 440 529 362 529C260 525 80 440 87 350Z" fill="#960000" stroke="#000" stroke-width="3"/>
<path d="M302 85L222 385Q215 405 240 425Q285 450 340 448Q370 440 377 420L457 108Z" fill="url(#gShaft)"/>
<path d="M302 85L222 385Q215 405 240 425Q285 450 340 448Q370 440 377 420" fill="none" stroke="#000" stroke-width="3"/>
<ellipse cx="380" cy="96" rx="80" ry="44" transform="rotate(15 380 96)" fill="#960000" stroke="#000" stroke-width="3"/>
<ellipse cx="381" cy="95" rx="21" ry="12" transform="rotate(10 381 95)" fill="#700000" stroke="#000" stroke-width="3"/>
<g fill="#700000" stroke="#000" stroke-width="3"><ellipse cx="339" cy="64" rx="5" ry="4"/><ellipse cx="372" cy="61" rx="5" ry="4"/><ellipse cx="407" cy="71" rx="5" ry="4"/><ellipse cx="433" cy="90" rx="5" ry="4"/><ellipse cx="438" cy="112" rx="5" ry="4"/><ellipse cx="421" cy="127" rx="5" ry="4"/><ellipse cx="388" cy="130" rx="5" ry="4"/><ellipse cx="352" cy="120" rx="5" ry="4"/><ellipse cx="328" cy="100" rx="5" ry="4"/><ellipse cx="322" cy="79" rx="5" ry="4"/></g>
</symbol>
<symbol id="joint" viewBox="0 0 560 800" overflow="visible">
<g stroke="#000" stroke-width="3" stroke-linejoin="round">
<path d="M522 380L570 377L583 388L598 418L633 422L652 445L646 470L540 492L512 440Z" fill="#960000"/>
<path d="M512 438L530 444L545 462L537 492L500 487Z" fill="#740000"/>
<path d="M612 452L650 446L640 497L618 500Z" fill="#380000"/>
<path d="M545 462L627 468L616 521L530 512Z" fill="#6c0000"/>
<path d="M525 388L550 392L548 412L524 412Z" fill="#5a0000"/>
</g>
</symbol>
</svg>

<header class="titlebar">
<div class="quick">
<svg class="logo"><use href="#visi"/></svg><span class="rule"></span>
<button aria-label="新建"><svg><use href="#newDoc"/></svg></button><button aria-label="打开"><svg><use href="#open"/></svg></button><button aria-label="浏览"><svg><use href="#folders"/></svg></button><button aria-label="保存"><svg><use href="#save"/></svg></button><button aria-label="全部保存"><svg><use href="#saveAll"/></svg></button><button aria-label="另存"><svg><use href="#saveBox"/></svg></button><button aria-label="打印"><svg><use href="#print"/></svg></button><button aria-label="查找"><svg><use href="#finder"/></svg></button><button aria-label="撤销"><svg><use href="#undo"/></svg></button><button aria-label="重做"><svg><use href="#redo"/></svg></button><button aria-label="历史"><svg><use href="#hour"/></svg></button>
<button class="more" aria-label="更多"><svg viewBox="0 0 10 10"><path d="M1 1H9M2 4H8L5 8Z" fill="#111" stroke="#111" stroke-width=".8"/></svg></button><span class="rule"></span>
</div>
<h1>VISI 2018 R2 from Vero Software x64 - tires.prt.wkf - [动态的]</h1>
<div class="wincontrols">
<button aria-label="最小化"><svg viewBox="0 0 10 10"><path d="M0 5.500H10"/></svg></button><button aria-label="还原"><svg viewBox="0 0 10 10"><path d="M.5 2.500H7.500V9.500H.5ZM2.500 2V.5H9.500V7.500H8"/></svg></button><button aria-label="关闭"><svg viewBox="0 0 10 10"><path d="M0 0L10 10M10 0L0 10"/></svg></button>
</div>
</header>

<nav class="menubar">
<a href="#">文件</a><a href="#">编辑</a><a href="#">线架构</a><a href="#">网格</a><a href="#">曲面</a><a href="#">实体编辑</a><a href="#">建模</a><a href="#">分析</a><a href="#">电极</a><a href="#">尺寸标注</a><a href="#">工程图</a><a href="#">系统</a><a href="#">视窗</a><a href="#">加工</a><a href="#">塑模</a><a href="#">冲模</a><a href="#">标准件</a><a href="#">模流分析</a><a href="#">?</a>
<div class="mdi">
<button aria-label="最小化窗口"><svg viewBox="0 0 10 10"><path d="M0 8.500H9"/></svg></button><button aria-label="还原窗口"><svg viewBox="0 0 10 10"><path d="M.5 3.500H6.500V9.500H.5ZM2.500 3V.5H9.500V7.500H7"/></svg></button><button aria-label="关闭窗口"><svg viewBox="0 0 10 10"><path d="M1 1L9 9M9 1L1 9"/></svg></button>
</div>
</nav>

<div class="ribbon">
<div class="tabs">
<button class="drop" aria-label="选择工具栏"><svg viewBox="0 0 8 4"><path d="M0 0H8L4 4Z"/></svg></button><button>编辑</button><button class="active">标准</button><button>线架构</button><button>建模</button><button>曲面</button><button>尺寸</button><button>应用</button><button>塑膜</button><button>冲模</button><button>加工</button><button>模流</button>
</div>
<div class="groups">
<section><div class="tools"><button aria-label="属性"><svg><use href="#palette"/></svg></button><button aria-label="预览"><svg><use href="#docEye"/></svg></button><button aria-label="显示链接"><svg><use href="#eyeLink"/></svg></button><button aria-label="隐藏链接"><svg><use href="#eyeUnlink"/></svg></button><button aria-label="过滤"><svg><use href="#eyeLights"/></svg></button><button aria-label="刷新显示"><svg><use href="#eyeCycle"/></svg></button><button aria-label="切换显示"><svg><use href="#eyePm"/></svg></button><button aria-label="显示"><svg><use href="#eyePlus"/></svg></button><button aria-label="隐藏"><svg><use href="#eyeMinus"/></svg></button></div><h2>属性/过滤器</h2></section>
<section><div class="tools"><button aria-label="重画"><svg><use href="#sync"/></svg></button><button aria-label="线框"><svg><use href="#cylWire"/></svg></button><button aria-label="消隐"><svg><use href="#cylOpen"/></svg></button><button aria-label="虚线"><svg><use href="#cylDim"/></svg></button><button aria-label="着色边"><svg><use href="#cylEdge"/></svg></button><button class="on" aria-label="着色"><svg><use href="#cylBlue"/></svg></button><button aria-label="透明边"><svg><use href="#cylCyan"/></svg></button><button aria-label="透明"><svg><use href="#cylLight"/></svg></button><button aria-label="三角面"><svg><use href="#cylTri"/></svg></button><button aria-label="转换"><svg><use href="#cylSwap"/></svg></button><button aria-label="更新着色"><svg><use href="#cylSync"/></svg></button><button aria-label="图形设置"><svg><use href="#wrench"/></svg></button></div><h2>图形</h2></section>
<section><div class="tools"><button aria-label="显示组"><svg><use href="#boxLink"/></svg></button><button aria-label="过滤组"><svg><use href="#boxLights"/></svg></button><button aria-label="刷新组"><svg><use href="#boxCycle"/></svg></button><button aria-label="切换组"><svg><use href="#boxPm"/></svg></button><button aria-label="中线"><svg><use href="#cylDash"/></svg></button><button aria-label="条纹"><svg><use href="#cylStripe"/></svg></button><button aria-label="检查"><svg><use href="#cylCheck"/></svg></button><button aria-label="标记"><svg><use href="#cylTag"/></svg></button><button aria-label="网面"><svg><use href="#cylMesh"/></svg></button><button aria-label="实体"><svg><use href="#cubeDark"/></svg></button></div><h2>图像 (进阶)</h2></section>
<section><div class="tools"><button aria-label="缩放"><svg><use href="#zoomCube"/></svg></button><button aria-label="全部"><svg><use href="#zoomFit"/></svg></button><button aria-label="原比例"><svg><use href="#fit11"/></svg></button><button aria-label="矢量"><svg><use href="#arrowG"/></svg></button><button aria-label="旋转"><svg><use href="#syncG"/></svg></button><button aria-label="视角"><svg><use href="#smile"/></svg></button></div><h2>视图</h2></section>
<section><div class="tools"><button aria-label="工作平面"><svg><use href="#axes"/></svg></button><button aria-label="移动平面"><svg><use href="#axes2"/></svg></button><button aria-label="旋转平面"><svg><use href="#axes3"/></svg></button></div><h2>工作平面</h2></section>
<section><div class="tools"><button aria-label="颜色"><svg><use href="#colors"/></svg></button><button aria-label="图层"><svg><use href="#docGrid"/></svg></button><button aria-label="设置"><svg><use href="#toolCircle"/></svg></button><button aria-label="窗口设置"><svg><use href="#winTool"/></svg></button><button aria-label="捕捉"><svg><use href="#handGrid"/></svg></button><button aria-label="栅格"><svg><use href="#gridRed"/></svg></button></div><h2>系统</h2></section>
</div>
</div>

<main class="work">
<aside class="side">
<div class="palette">
<button aria-label="缩放窗口"><svg><use href="#zoomStack"/></svg></button><button class="sub" aria-label="直线"><svg><use href="#penLines"/></svg></button>
<button aria-label="全屏"><svg><use href="#fit"/></svg></button><button class="sub" aria-label="圆弧"><svg><use href="#penCurve"/></svg></button>
<button class="sub" aria-label="动态缩放"><svg><use href="#zoomCube"/></svg></button><button class="sub" aria-label="确认"><svg><use href="#okBox"/></svg></button>
<button class="sub" aria-label="坐标"><svg><use href="#axes"/></svg></button><button class="sub" aria-label="曲线"><svg><use href="#penWave"/></svg></button>
<button class="sub" aria-label="外观"><svg><use href="#palette"/></svg></button><button class="sub" aria-label="曲面"><svg><use href="#surface"/></svg></button>
<button class="sub" aria-label="刷新"><svg><use href="#sync"/></svg></button><button class="sub" aria-label="实体块"><svg><use href="#cubeGray"/></svg></button>
<button class="sub" aria-label="帮助"><svg><use href="#help"/></svg></button><button class="sub" aria-label="标注"><svg><use href="#dim"/></svg></button>
<button class="sub" aria-label="删除"><svg><use href="#bin"/></svg></button><button class="sub" aria-label="撤回"><svg><use href="#undo"/></svg></button>
<button class="sub" aria-label="加工向导"><svg><use href="#wheel"/></svg></button><button aria-label="文件夹"><svg><use href="#folderDoc"/></svg></button>
</div>
</aside>
<div class="viewport">
<div class="viewtools">
<button aria-label="菜单"><svg><use href="#menu"/></svg></button><button aria-label="适合"><svg><use href="#fit"/></svg></button><button aria-label="放大"><svg><use href="#zoomStack"/></svg></button><button aria-label="轴"><svg><use href="#axesDark"/></svg></button><button aria-label="上"><svg><use href="#cTop"/></svg></button><button aria-label="下"><svg><use href="#cBottom"/></svg></button><button aria-label="左"><svg><use href="#cBackL"/></svg></button><button aria-label="右"><svg><use href="#cFrontR"/></svg></button><button aria-label="前"><svg><use href="#cFrontL"/></svg></button><button aria-label="后"><svg><use href="#cBackR"/></svg></button><button aria-label="等轴"><svg><use href="#cAll"/></svg></button>
</div>
<div class="viewtools down">
<button aria-label="线框视图"><svg><use href="#cylWire"/></svg></button><button aria-label="消隐视图"><svg><use href="#cylOpen"/></svg></button><button class="on" aria-label="着色视图"><svg><use href="#cylBlue"/></svg></button><button aria-label="透明视图"><svg><use href="#cylLight"/></svg></button><button aria-label="网格视图"><svg><use href="#cylTri"/></svg></button>
</div>
<svg class="scene" viewBox="60 109 1860 892">
<g transform="translate(600 230) scale(.33333)">
<use href="#tire" width="560" height="800"/>
<use href="#tire" x="511" y="53" width="560" height="800"/>
<use href="#tire" x="1022" y="106" width="560" height="800"/>
<use href="#tire" x="1527" y="159" width="560" height="800"/>
<use href="#joint" width="560" height="800"/>
<use href="#joint" x="509" y="52" width="560" height="800"/>
<use href="#joint" x="1020" y="103" width="560" height="800"/>
<g stroke="#000" stroke-width="3" stroke-linejoin="round">
<path d="M95 392L121 372L168 415L178 424H90Z" fill="#960000"/><path d="M96 392L106 388V414L94 416Z" fill="#200"/><path d="M91 417L178 424L167 475L84 466Z" fill="#780000"/>
<path d="M2050 537L2056 534L2085 535L2096 548L2090 625L2018 618L2035 585L2042 575Z" fill="#960000"/><path d="M2018 616L2096 622L2085 674L2003 663Z" fill="#6c0000"/>
</g>
<path d="M378 410H420" stroke="#4a7a00" stroke-width="6"/><path d="M414 402L442 415L414 422Z" fill="#3f6a00"/>
<path d="M308 447L322 512" stroke="#3cb4b4" stroke-width="7"/><path d="M311 510L334 506L327 534Z" fill="#3cb4b4"/><path d="M303 446H314V456H306Z" fill="#10ff70"/>
</g>
<text x="750" y="371" font-size="9" fill="#ff1010">Y</text>
<text x="705" y="417" font-size="13" fill="#e8e8e8">Z</text>
<path d="M120 942L145 945L139 965L116 964Z" fill="#7d9270"/>
<path d="M116 963L139 965L145 945" fill="none" stroke="#ff0" />
<path d="M121 957L149 959L145 945M121 957L117 977L113 961" fill="none" stroke="#c8ccd4"/>
<path d="M120 942L160 945" stroke="#00b400" stroke-width="2"/><path d="M158 941L168 946L158 950Z" fill="#00a800"/>
<path d="M119 943L114 962" stroke="#c00000" stroke-width="3"/><path d="M110 960L117 962L112 971Z" fill="#e00000"/>
<path d="M120 943L128 978" stroke="#00f0f0" stroke-width="2"/><path d="M125 978L133 977L130 985Z" fill="#00f0f0"/>
<circle cx="119" cy="941" r="4" fill="#888"/>
<text x="171" y="952" font-size="12" fill="#f01818">Y</text><text x="106" y="980" font-size="12" fill="#f01818">X</text><text x="126" y="994" font-size="13" fill="#d4d8e0">Z</text>
<g fill="none" stroke="#ef8426" stroke-width="2"><path d="M892 517V539H911M896 513V536Q905 536 912 539M900 509V532Q909 533 913 538M936 517V539H917M932 513V536Q923 536 916 539M928 509V532Q919 533 915 538"/></g>
<path d="M917 508Q905 512 905 519Q905 525 911 526Q917 525 912 534Q922 530 923 522Q922 518 917 519Q912 520 917 508Z" fill="url(#gOrange)"/>
<text class="wm" x="946" y="528" font-size="17" fill="#f08322">智造资料网</text>
<text class="wm" x="946" y="538" font-size="4" fill="#ee7a26">INTELLIGENT MANUFACTURING DATA</text>
</svg>
</div>
</main>

<footer>
<div class="status">
<span class="grip"></span><input class="cmd" aria-label="命令"><span class="grip"></span>
<span class="cell view">绝对 XY 上视图</span><span class="cell abs">绝对视图</span><span class="grip"></span><strong>LAYER0</strong><span class="cell blank"></span><span class="cell swatch"><i></i></span><span class="cell swatch"><i></i></span><span class="cell swatch"><i></i></span><span class="cell world"><svg><use href="#globe"/></svg></span>
</div>
<div class="status second">
<span class="cell lock">拴牢</span>
<button class="cell" aria-label="同步"><svg><use href="#redSync"/></svg></button><button class="cell on" aria-label="魔棒"><svg><use href="#wand"/></svg></button><button class="cell" aria-label="选取"><svg><use href="#handBox"/></svg></button><button class="cell" aria-label="提示"><svg><use href="#help"/></svg></button><button class="cell" aria-label="移动"><svg><use href="#cubes"/></svg></button><button class="cell on" aria-label="面"><svg><use href="#cubeMag"/></svg></button><button class="cell" aria-label="文档"><svg viewBox="0 0 20 20"><path d="M5 2H15V18H5Z" fill="#dfe6ee" stroke="#555" stroke-width="2"/></svg></button><button class="cell" aria-label="接受"><svg viewBox="0 0 20 20"><circle cx="10" cy="10" r="8" fill="#e8f4e8" stroke="#187818" stroke-width="3"/><path d="M6 9L10 14L14 9Z" fill="#222"/></svg></button><button class="cell" aria-label="布局"><svg viewBox="0 0 20 20"><path d="M2 3H18V18H2ZM10 3V18M2 10H18" fill="#e8ecf8" stroke="#445" stroke-width="1.500"/></svg></button>
<span class="cell scale">Ls: 1.00 Ps: 1.00</span><span class="cell unit">单位: 毫米</span><output class="cell coords"><b>X =-2179.650</b> Y = 0184.335 Z = 0000.000</output>
</div>
<div class="taskbar"><span class="search"></span><span class="task"></span><span class="task hot"></span><time>18:18</time></div>
<div class="ime">
<svg class="sogou" viewBox="0 0 28 28"><path d="M1 6Q0 3 4 3L20 0Q24 0 25 4L28 20Q28 24 24 25L9 28Q5 28 4 24Z" fill="#f4581e"/><path d="M21 7Q9 4 8 10Q9 14 15 14Q22 15 20 19Q17 23 7 20" fill="none" stroke="#fff" stroke-width="4"/></svg>
<button>中</button>
<button aria-label="标点"><svg viewBox="0 0 16 16"><circle cx="4" cy="6" r="2" fill="none" stroke="#1f74c4" stroke-width="1.500"/><path d="M11 8H14V11Q14 13 11 14Q12 12 11 11Z" fill="#1f74c4"/></svg></button>
<button aria-label="表情"><svg viewBox="0 0 16 16"><g fill="none" stroke="#1f74c4" stroke-width="1.500"><circle cx="8" cy="8" r="7"/><path d="M4 9Q8 14 12 9M5.500 5V7M10.500 5V7"/></g></svg></button>
<button aria-label="语音"><svg viewBox="0 0 16 16"><path d="M5 3Q8-1 11 3V8Q8 12 5 8Z" fill="#1f74c4"/><path d="M2.500 7Q3 12 8 12T13.500 7M8 12V15M5 15H11" fill="none" stroke="#1f74c4" stroke-width="1.500"/></svg></button>
<button aria-label="键盘"><svg viewBox="0 0 16 16"><path d="M1 3H15V13H1Z" fill="none" stroke="#1f74c4" stroke-width="2"/><path d="M3 6H13M3 8H13M4 11H12" stroke="#1f74c4" stroke-dasharray="2 1"/></svg></button>
<button aria-label="账户"><svg viewBox="0 0 16 16"><circle cx="7" cy="4" r="3" fill="#a8b8cc"/><path d="M1 13Q1 8 7 8T13 13L12 15H1Z" fill="#a8b8cc"/><circle cx="12" cy="11" r="3" fill="#d8e0ea"/></svg></button>
<button aria-label="皮肤"><svg viewBox="0 0 16 16"><path d="M1 3L5 1Q8 4 11 1L15 3L14 7H12V15H4V7H2Z" fill="#1f74c4"/></svg></button>
<button aria-label="工具箱"><svg viewBox="0 0 16 16"><path d="M1 1H7V7H1ZM1 9H7V15H1ZM9 9H15V15H9Z" fill="#1f74c4"/><path d="M10 2H14V6H10Z" fill="none" stroke="#1f74c4" stroke-width="1.500"/></svg></button>
</div>
</footer>
</body>
</html>
```
FILE: styles.css
```css
* { box-sizing: border-box; }
body {
  margin: 0;
  height: 100vh;
  display: flex;
  flex-direction: column;
  overflow: hidden;
  background: #d6dbe8;
  color: #000;
  font: 12px/16px "Noto Sans", "Noto Sans CJK SC", sans-serif;
}
button { border: 0; padding: 0; margin: 0; background: none; font: inherit; color: inherit; }
h1, h2 { margin: 0; font: inherit; }
svg { display: block; }
.sprite { position: absolute; width: 0; height: 0; }

/* title bar */
.titlebar { display: flex; height: 23px; background: #fff; }
.quick { display: flex; align-items: center; width: 318px; padding-left: 2px; }
.quick button { width: 24px; height: 23px; padding: 2px; }
.quick svg { width: 20px; height: 20px; }
.quick .logo { width: 16px; height: 16px; }
.quick .rule { width: 1px; height: 13px; margin: 0 6px 0 2px; background: #a0a0a0; }
.quick .more { width: 16px; padding: 0 3px; }
.quick .more svg { width: 10px; height: 10px; }
.quick .more + .rule { margin: 0 0 0 5px; }
.titlebar h1 { flex: 1; text-align: center; line-height: 24px; }
.wincontrols { display: flex; padding-right: 2px; }
.wincontrols button { width: 46px; height: 20px; display: grid; place-items: center; }
.wincontrols svg, .mdi svg { width: 10px; height: 10px; fill: none; stroke: #000; }

/* menu bar */
.menubar { display: flex; align-items: center; gap: 14px; height: 19px; padding-left: 7px; }
.menubar a { color: #000; text-decoration: none; white-space: nowrap; }
.mdi { display: flex; margin-left: auto; padding-right: 1px; }
.mdi button { width: 18px; height: 18px; display: grid; place-items: center; }
.mdi svg { stroke: #9a9078; }

/* ribbon */
.ribbon { border-left: 9px solid #4c6185; height: 67px; padding-left: 3px; }
.tabs { display: flex; align-items: flex-end; height: 22px; }
.tabs button { height: 20px; padding: 0 5px 0 4px; background: #e8f2fd; border: solid #8f8f80; border-width: 1px 1px 0 0; }
.tabs .drop { width: 19px; border-left-width: 1px; }
.tabs .drop svg { width: 8px; height: 4px; }
.tabs .active { height: 22px; font-weight: bold; background: #b8d8f8; }
.groups { display: flex; height: 45px; }
.groups section {
  padding: 3px 9px 0 8px;
  background: radial-gradient(circle at 2px 2px, #a9aebb 1px, transparent 2px) 0 0 / 4px 5px repeat-y;
}
.tools { display: flex; }
.tools button { width: 26px; height: 24px; padding: 2px 3px; }
.tools svg { width: 20px; height: 20px; }
.tools .on { width: 24px; margin: 0 1px; padding: 1px; border: 1px solid #e2b84e; background: #ffe27a; }
.groups h2 { text-align: center; line-height: 20px; }

/* work area */
.work { flex: 1; display: flex; min-height: 0; }
.side { width: 60px; border-top: 9px solid #4c6185; }
.palette {
  display: grid;
  grid-template-columns: 26px 26px;
  grid-auto-rows: 26px;
  margin-top: 2px;
  padding: 10px 0 14px 5px;
  background:
    radial-gradient(circle at 2px 2px, #a9aebb 1px, transparent 2px) 0 0 / 5px 4px repeat-x,
    radial-gradient(circle at 2px 2px, #a9aebb 1px, transparent 2px) 0 100% / 5px 4px repeat-x;
}
.palette button { padding: 3px; position: relative; }
.palette svg { width: 20px; height: 20px; }
.palette .sub::after { content: ""; position: absolute; right: 2px; top: 2px; border: 3px solid transparent; border-top-color: #000; border-bottom: 0; }
.viewport { flex: 1; position: relative; padding: 4px; background: linear-gradient(#000018, #48658e); }
.viewtools { display: flex; gap: 4px; }
.viewtools.down { flex-direction: column; width: 24px; margin-top: 4px; }
.viewtools button { width: 24px; height: 24px; padding: 2px; background: #80809a; }
.viewtools .on { padding: 1px; border: 1px solid #e0b050; background: #948448; }
.viewtools svg { width: 20px; height: 20px; }
.scene { position: absolute; inset: 0; width: 100%; height: 100%; pointer-events: none; font-family: "Liberation Sans", sans-serif; }
.wm { font-family: "Liberation Sans", "Noto Sans CJK SC", sans-serif; font-weight: bold; }

/* status rows */
footer { position: relative; }
.status { display: flex; justify-content: flex-end; align-items: center; height: 19px; line-height: 18px; white-space: nowrap; }
.grip { width: 5px; height: 15px; background: radial-gradient(circle at 1px 1px, #8f96a6 1px, transparent 1px) 0 0 / 3px 3px; }
.cmd { width: 131px; height: 16px; border: 0; padding: 0; margin-right: 2px; background: #fff; }
.cell { display: block; height: 17px; border-left: 1px solid #a3a3a3; }
.view { width: 113px; padding-left: 7px; border: 0; }
.abs { width: 65px; padding-left: 8px; }
.status strong { width: 61px; padding-left: 5px; }
.blank { width: 32px; }
.swatch { width: 43px; padding: 1px 5px; }
.swatch i { display: block; height: 14px; background: #48658e; }
.world { width: 36px; padding-left: 7px; }
.world svg { width: 14px; height: 14px; }
.second { height: 20px; border-top: 1px solid #a3a3a3; line-height: 20px; }
.second .cell { height: 19px; }
.lock { width: 43px; padding-left: 8px; }
button.cell { width: 31px; padding: 1px 5px; }
button.cell svg { width: 18px; height: 18px; }
button.on svg { background: #f8e080; }
.status .on svg { outline: 1px solid #e0c050; outline-offset: -1px; }
.scale { width: 126px; padding-left: 8px; font-size: 13px; }
.unit { width: 74px; padding-left: 8px; }
.coords { width: 266px; padding-left: 8px; font-size: 13px; }
.coords b { font-weight: normal; color: #f00; }

.taskbar { display: flex; height: 8px; padding-left: 48px; background: #1e1f20; overflow: hidden; }
.search { width: 344px; border: solid #c0c0c0; border-width: 1px 1px 0; background: #f1f1f1; margin-right: 197px; }
.task { width: 48px; margin-right: 1px; background: #4c4c4c; }
.hot { background: #a86028; }
.taskbar time { margin-left: auto; padding: 2px 73px 0 0; color: #fff; }

.ime { position: absolute; right: 355px; top: 8px; display: flex; align-items: center; height: 23px; padding-left: 24px; background: #fff; border: 1px solid #a0a4ac; }
.ime button { width: 22px; height: 20px; display: grid; place-items: center; font: 500 15px/20px "Noto Sans CJK SC", sans-serif; color: #1f74c4; }
.ime button svg { width: 16px; height: 16px; }
.sogou { position: absolute; left: -7px; top: -5px; width: 28px; height: 28px; }
```
